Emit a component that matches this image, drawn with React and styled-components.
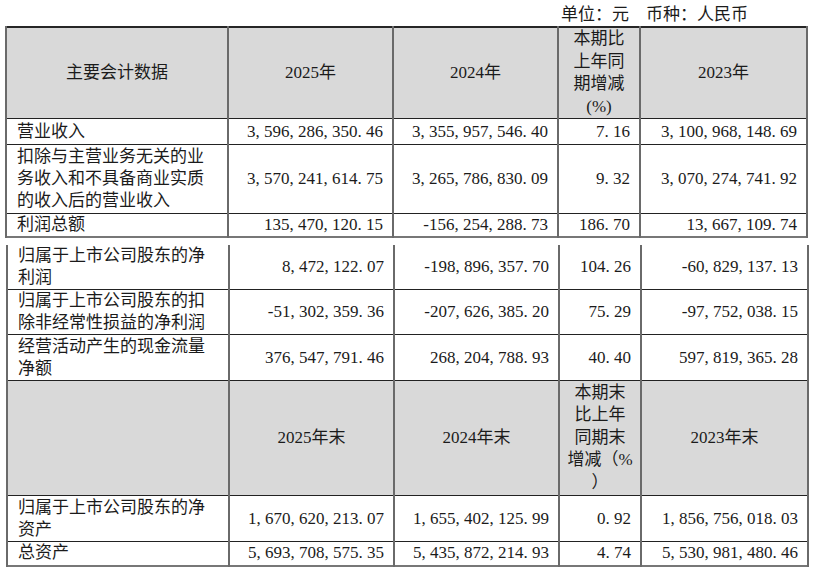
import React from 'react'
import styled, { createGlobalStyle } from 'styled-components'

const Global = createGlobalStyle`
body {
  margin: 0;
  background: #fff;
}
`

const Page = styled.div`
padding: 4px 0 6px 5px;
width: 801px;
font-family: "Liberation Serif", "Noto Sans CJK SC", serif;
font-size: 17px;
color: #1b1b1b;
`

const Caption = styled.div`
text-align: right;
padding-right: 58px;
line-height: 22px;
white-space: pre;
`

const Table = styled.table`
width: 801px;
table-layout: fixed;
border-collapse: collapse;
border-top: ${p => (p.$open ? 'none' : '2px solid #262626')};
border-bottom: 2px solid #777;
margin: ${p => (p.$open ? '7px 0 0 1px' : '0')};
`

const Row = styled.tr`
height: ${p => p.$h}px;
`

const Cell = styled.td`
border-left: 2px solid #6a6a6a;
border-right: 2px solid #6a6a6a;
border-top: 1px solid #222;
border-bottom: 1px solid #222;
line-height: 22px;
vertical-align: middle;
`

const Head = styled(Cell)`
background: #d9d9d9;
text-align: center;
line-height: 22.5px;
padding: 0 6px;
white-space: ${p => (p.$tight ? 'nowrap' : 'normal')};
`

const Label = styled(Cell)`
text-align: left;
padding: 0 9px 0 10px;
`

const Num = styled(Cell)`
text-align: right;
padding: 0 9px 0 4px;
white-space: nowrap;
`

const Punct = styled.span`
margin-right: 0.25em;
`

const Open = styled(Row)`
& > td {
  border-top: none;
}
`

// SimSun-like spacing: comma and point take half an em
const Figure = ({ v }) => (
  <>
    {v.split(/([,.])/).map((s, i) =>
      s === ',' || s === '.' ? <Punct key={i}>{s}</Punct> : s
    )}
  </>
)

const Cols = () => (
  <colgroup>
    <col style={{ width: 222 }} />
    <col style={{ width: 165 }} />
    <col style={{ width: 165 }} />
    <col style={{ width: 82 }} />
    <col style={{ width: 167 }} />
  </colgroup>
)

const DataRow = ({ r, first }) => {
  const R = first ? Open : Row
  return (
    <R $h={r.h}>
      <Label>{r.label}</Label>
      {r.values.map((v, i) => (
        <Num key={i}><Figure v={v} /></Num>
      ))}
    </R>
  )
}

const row = (label, values, h) => ({ label, values, h })

const top = [
  row('营业收入', ['3,596,286,350.46', '3,355,957,546.40', '7.16', '3,100,968,148.69'], 26),
  row('扣除与主营业务无关的业务收入和不具备商业实质的收入后的营业收入', ['3,570,241,614.75', '3,265,786,830.09', '9.32', '3,070,274,741.92'], 69),
  row('利润总额', ['135,470,120.15', '-156,254,288.73', '186.70', '13,667,109.74'], 23),
]

const flows = [
  row('归属于上市公司股东的净利润', ['8,472,122.07', '-198,896,357.70', '104.26', '-60,829,137.13'], 42),
  row('归属于上市公司股东的扣除非经常性损益的净利润', ['-51,302,359.36', '-207,626,385.20', '75.29', '-97,752,038.15'], 45),
  row('经营活动产生的现金流量净额', ['376,547,791.46', '268,204,788.93', '40.40', '597,819,365.28'], 46),
]

const stocks = [
  row('归属于上市公司股东的净资产', ['1,670,620,213.07', '1,655,402,125.99', '0.92', '1,856,756,018.03'], 46),
  row('总资产', ['5,693,708,575.35', '5,435,872,214.93', '4.74', '5,530,981,480.46'], 24),
]

export default function App() {
  return (
    <Page>
      <Global />
      <Caption>单位：元　币种：人民币</Caption>
      <Table>
        <Cols />
        <tbody>
          <Row $h={91}>
            <Head>主要会计数据</Head>
            <Head>2025年</Head>
            <Head>2024年</Head>
            <Head $tight>本期比<br />上年同<br />期增减<br />(%)</Head>
            <Head>2023年</Head>
          </Row>
          {top.map(r => <DataRow key={r.label} r={r} />)}
        </tbody>
      </Table>
      <Table $open>
        <Cols />
        <tbody>
          {flows.map((r, i) => <DataRow key={r.label} r={r} first={i === 0} />)}
          <Row $h={115}>
            <Head></Head>
            <Head>2025年末</Head>
            <Head>2024年末</Head>
            <Head $tight>本期末<br />比上年<br />同期末<br />增减（%<br />）</Head>
            <Head>2023年末</Head>
          </Row>
          {stocks.map(r => <DataRow key={r.label} r={r} />)}
        </tbody>
      </Table>
    </Page>
  )
}
